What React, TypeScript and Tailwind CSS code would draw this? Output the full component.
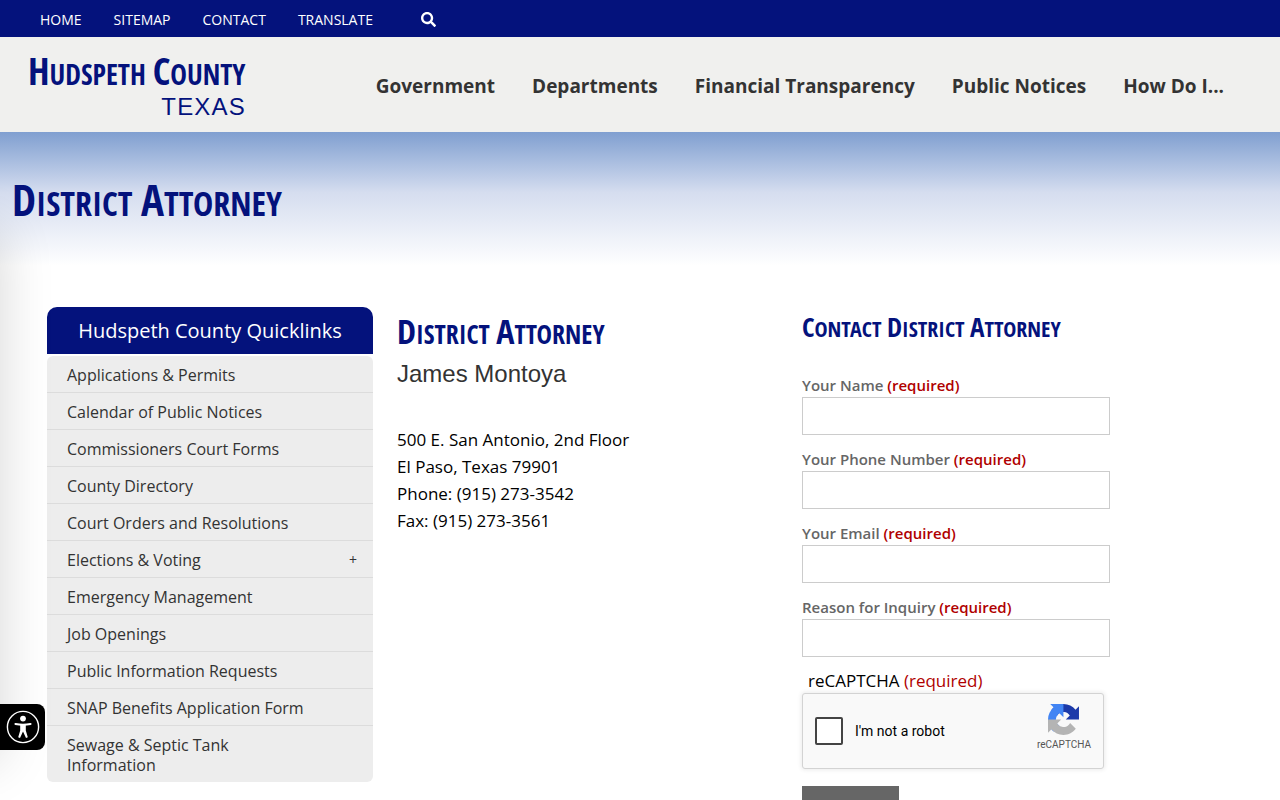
import { FaSearch } from 'react-icons/fa'

const topLinks = ['Home', 'Sitemap', 'Contact', 'Translate']
const menu = ['Government', 'Departments', 'Financial Transparency', 'Public Notices', 'How Do I...']

const quicklinks: { label: string; more?: boolean }[] = [
  { label: 'Applications & Permits' },
  { label: 'Calendar of Public Notices' },
  { label: 'Commissioners Court Forms' },
  { label: 'County Directory' },
  { label: 'Court Orders and Resolutions' },
  { label: 'Elections & Voting', more: true },
  { label: 'Emergency Management' },
  { label: 'Job Openings' },
  { label: 'Public Information Requests' },
  { label: 'SNAP Benefits Application Form' },
  { label: 'Sewage & Septic Tank Information' },
]

const fields = [
  { id: 'name', label: 'Your Name', type: 'text' },
  { id: 'phone', label: 'Your Phone Number', type: 'tel' },
  { id: 'email', label: 'Your Email', type: 'email' },
  { id: 'reason', label: 'Reason for Inquiry', type: 'text' },
]

export default function App() {
  return (
    <div className="min-h-screen bg-white font-['Open_Sans','Noto_Sans',sans-serif] text-black">
      <TopBar />
      <Header />
      <div className="flex h-[134px] items-center bg-linear-to-b from-[#809fd0] via-[#d5ddef] via-45% to-white px-3">
        <h1 className="leading-none text-[#04127c]">
          <Caps text="District Attorney" big="text-[43px]" small="text-[34px]" />
        </h1>
      </div>
      <main className="grid grid-cols-[326fr_381fr_431fr] items-start gap-6 px-[47px] pt-[41px]">
        <Quicklinks />
        <Office />
        <ContactForm />
      </main>
      {/* closed accessibility drawer, only its shadow shows */}
      <div className="fixed -left-80 top-[230px] bottom-10 w-80 shadow-[0_0_50px_rgba(0,0,0,0.16)]" />
      <button aria-label="Accessibility options" className="fixed left-0 top-[704px] flex h-[46px] w-[45px] items-center justify-center rounded-r-lg bg-black">
        <svg viewBox="0 0 34 34" className="size-[34px]" fill="none" stroke="#fff">
          <circle cx="17" cy="17" r="15.6" strokeWidth="1.4" />
          <circle cx="17" cy="8.600" r="2.9" fill="#fff" stroke="none" />
          <path d="M9.5 14c5 1 10 1 15 0" strokeWidth="2.2" strokeLinecap="round" />
          <path d="M14.200 14h5.600v6.500l2 6.800-1.800.7-3-6.500-3 6.500-1.800-.7 2-6.800z" fill="#fff" stroke="none" />
        </svg>
      </button>
    </div>
  )
}

// small caps with a taller first letter per word
function Caps({ text, big, small }: { text: string; big: string; small: string }) {
  return (
    <span className={`font-['Open_Sans_Condensed','Roboto_Condensed',sans-serif] uppercase whitespace-nowrap ${small}`}>
      {text.split(' ').map((w, i) => (
        <span key={w}>{i > 0 && ' '}<span className={big}>{w[0]}</span>{w.slice(1)}</span>
      ))}
    </span>
  )
}

function TopBar() {
  return (
    <nav className="flex h-[37px] items-center bg-[#04127c] px-10 pt-0.5 text-white">
      <ul className="flex gap-8 text-[14px] uppercase">
        {topLinks.map(l => <li key={l}><a href="#">{l}</a></li>)}
      </ul>
      <button aria-label="Search" className="ml-12"><FaSearch className="size-[15px]" /></button>
    </nav>
  )
}

function Header() {
  return (
    <header className="flex h-[95px] items-center bg-[#f0f0ee] px-7 pt-1">
      <a href="#" className="flex w-[222px] flex-col pb-1 text-[#04127c]">
        <span className="font-bold leading-9">
          <Caps text="Hudspeth County" big="text-[38px]" small="text-[28px]" />
        </span>
        <span className="self-end pr-1 font-['Liberation_Sans',sans-serif] text-[24px] leading-5 tracking-wider">TEXAS</span>
      </a>
      <nav className="ml-auto pr-7">
        <ul className="flex gap-[37px] text-[19px] font-bold text-[#333]">
          {menu.map(m => <li key={m}><a href="#">{m}</a></li>)}
        </ul>
      </nav>
    </header>
  )
}

function Quicklinks() {
  return (
    <aside>
      <h2 className="rounded-t-[10px] bg-[#04127c] text-center text-[20px] leading-[47px] text-white">Hudspeth County Quicklinks</h2>
      <ul className="mt-0.5 overflow-hidden rounded-md bg-[#ededed] text-[16px] leading-5 text-[#333]">
        {quicklinks.map(q => (
          <li key={q.label} className="border-b border-[#dcdcdc] last:border-b-0">
            <a href="#" className="flex items-center justify-between pt-[9px] pb-[7px] pl-5 pr-4">
              <span className="max-w-[250px]">{q.label}</span>
              {q.more && <span className="text-[14px]">+</span>}
            </a>
          </li>
        ))}
      </ul>
    </aside>
  )
}

function Office() {
  return (
    <section>
      <h2 className="mt-1.5 leading-9 text-[#04127c]">
        <Caps text="District Attorney" big="text-[34px]" small="text-[26px]" />
      </h2>
      <h3 className="mt-0.5 font-['Liberation_Sans',sans-serif] text-[24px] leading-8 text-[#333]">James Montoya</h3>
      <p className="mt-9 text-[17px] leading-[27px]">
        500 E. San Antonio, 2nd Floor<br />
        El Paso, Texas 79901<br />
        Phone: (915) 273-3542<br />
        Fax: (915) 273-3561
      </p>
    </section>
  )
}

function ContactForm() {
  return (
    <form className="max-w-[308px]">
      <h2 className="mt-0.5 mb-6 leading-9 text-[#04127c]">
        <Caps text="Contact District Attorney" big="text-[27px]" small="text-[22px]" />
      </h2>
      {fields.map(f => (
        <div key={f.id} className="mb-3">
          <label htmlFor={f.id} className="block text-[15px] font-semibold leading-6 text-[#666]">
            {f.label} <span className="text-[#b00000]">(required)</span>
          </label>
          <input id={f.id} type={f.type} required className="block h-[38px] w-full border border-[#ccc] bg-white px-2" />
        </div>
      ))}
      <p className="pl-1.5 text-[17px] leading-6">
        reCAPTCHA <span className="text-[#b00000]">(required)</span>
      </p>
      <div className="flex h-[76px] w-[302px] items-center rounded-[3px] border border-[#d3d3d3] bg-[#f9f9f9] px-3 font-[Roboto,sans-serif] shadow-[0_0_4px_1px_rgba(0,0,0,0.08)]">
        <input id="robot" type="checkbox" className="size-7 appearance-none rounded-[2px] border-2 border-[#444] bg-white" />
        <label htmlFor="robot" className="pl-3 text-[14px]">I'm not a robot</label>
        <div className="ml-auto flex flex-col items-center pb-2">
          <svg viewBox="0 0 64 64" className="size-[31px]">
            <path fill="#1c3aa9" d="M64 31.955l-.033-1.37V4.687l-7.16 7.16C50.948 4.674 42.033.093 32.05.093c-10.4 0-19.622 4.96-25.458 12.64l11.736 11.86a15.55 15.55 0 0 1 4.754-5.334c2.05-1.6 4.952-2.906 8.968-2.906.485 0 .86.057 1.135.163 4.976.393 9.288 3.14 11.828 7.124l-8.307 8.307L64 31.953" />
            <path fill="#4285f4" d="M31.862.094l-1.37.033H4.594l7.16 7.16C4.58 13.147 0 22.06 0 32.046c0 10.4 4.96 19.622 12.64 25.458L24.5 45.768a15.55 15.55 0 0 1-5.334-4.754c-1.6-2.05-2.906-4.952-2.906-8.968 0-.485.057-.86.163-1.135.393-4.976 3.14-9.288 7.124-11.828l8.307 8.307L31.86.095" />
            <path fill="#b4b4b4" d="M.001 32.045l.033 1.37v25.898l7.16-7.16c5.86 7.173 14.774 11.754 24.76 11.754 10.4 0 19.622-4.96 25.458-12.64l-11.736-11.86a15.55 15.55 0 0 1-4.754 5.334c-2.05 1.6-4.952 2.906-8.968 2.906-.485 0-.86-.057-1.135-.163-4.976-.393-9.288-3.14-11.828-7.124l8.307-8.307c-10.522.04-22.4.066-27.295-.005" />
          </svg>
          <span className="mt-1 text-[10px] leading-3 text-[#555]">reCAPTCHA</span>
        </div>
      </div>
      <button type="submit" className="mt-[17px] w-[97px] bg-[#666] py-5 text-[16px] leading-6 text-white">Submit</button>
    </form>
  )
}
